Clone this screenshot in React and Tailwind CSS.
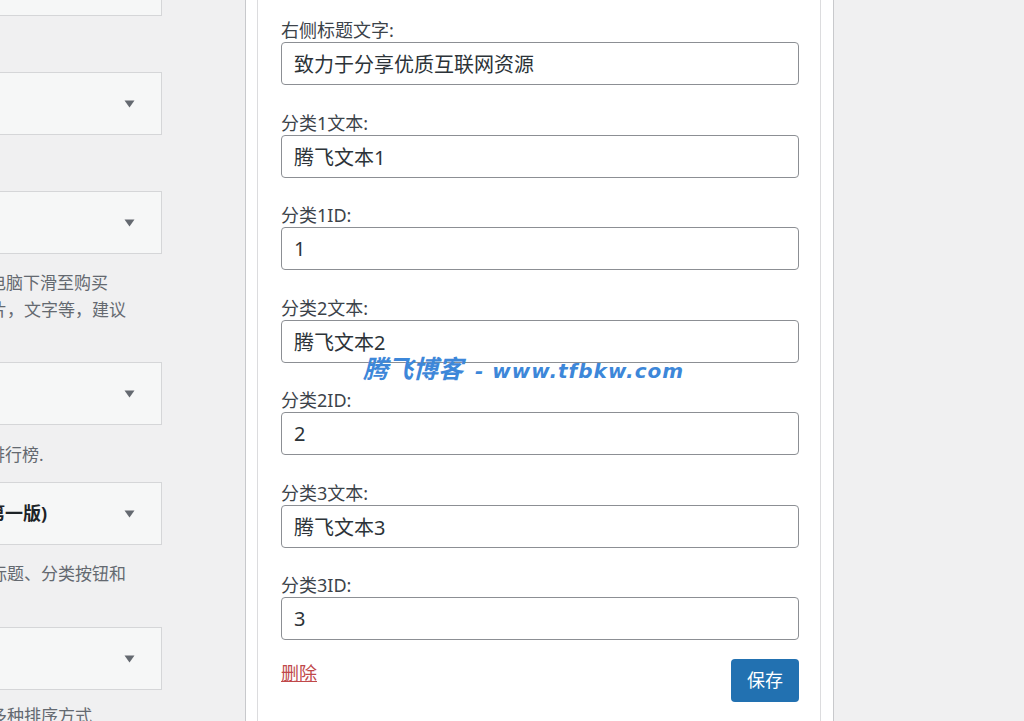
import React from "react";

const fontStack = { fontFamily: '"Noto Sans", "Noto Sans CJK SC", sans-serif' };

const fields = [
  { label: "右侧标题文字:", value: "致力于分享优质互联网资源" },
  { label: "分类1文本:", value: "腾飞文本1" },
  { label: "分类1ID:", value: "1" },
  { label: "分类2文本:", value: "腾飞文本2" },
  { label: "分类2ID:", value: "2" },
  { label: "分类3文本:", value: "腾飞文本3" },
  { label: "分类3ID:", value: "3" },
];

const Arrow = () => (
  <svg width="11" height="8" viewBox="0 0 11 8" className="mr-[26px] shrink-0">
    <path d="M0.5 0.5 L10.5 0.5 L5.5 7.5 Z" fill="#646970" />
  </svg>
);

const SelectBox = ({ className = "", children }) => (
  <div
    className={`shrink-0 w-[162px] h-[63px] bg-[#f6f7f7] border border-l-0 border-[#d5d6d8] flex items-center justify-between ${className}`}
  >
    <div className="overflow-hidden whitespace-nowrap">{children}</div>
    <Arrow />
  </div>
);

const HelpText = ({ children, shift = 12, className = "" }) => (
  <p
    className={`shrink-0 text-[17px] leading-[27px] text-[#646970] whitespace-nowrap ${className}`}
    style={{ marginLeft: -shift }}
  >
    {children}
  </p>
);

const LeftColumn = () => (
  <div className="w-[245px] shrink-0 overflow-hidden flex flex-col">
    {/* select cut off by the top edge */}
    <div className="shrink-0 w-[162px] h-[16px] bg-[#f6f7f7] border-r border-b border-[#d5d6d8]" />
    <SelectBox className="mt-[56px]" />
    <SelectBox className="mt-[56px]" />
    <div className="shrink-0 mt-[15px]">
      <HelpText shift={11}>电脑下滑至购买</HelpText>
      <HelpText shift={10}>片，文字等，建议</HelpText>
    </div>
    <SelectBox className="mt-[39px]" />
    <HelpText shift={12} className="mt-[16px]">排行榜.</HelpText>
    <SelectBox className="mt-[14px]">
      <span className="block text-[18px] font-bold text-[#1d2327] -ml-[13px]">
        第一版)
      </span>
    </SelectBox>
    <HelpText shift={10} className="mt-[15px]">标题、分类按钮和</HelpText>
    <SelectBox className="mt-[40px]" />
    <HelpText shift={10} className="mt-[12px]">多种排序方式</HelpText>
  </div>
);

const Field = ({ label, value }) => (
  <div className="mb-[25.5px]">
    <label className="block text-[18px] leading-[24px] text-[#3c434a]">{label}</label>
    <input
      readOnly
      value={value}
      className="block w-[518px] h-[43px] border border-[#8c8f94] rounded-[4px] px-[12px] text-[20px] text-[#2c3338] bg-white outline-none"
      style={fontStack}
    />
  </div>
);

export default function App() {
  return (
    <div
      className="relative w-[1024px] h-[721px] overflow-hidden bg-[#f0f0f1] flex"
      style={fontStack}
    >
      <LeftColumn />

      {/* widget panel */}
      <div className="w-[589px] shrink-0 bg-white border-x border-[#c8c9cc] pl-[11px] pr-[12px]">
        <div className="w-[564px] h-full border-x border-[#dcdcde] bg-white pt-[18px] pl-[23px]">
          {fields.map((f) => (
            <Field key={f.label} label={f.label} value={f.value} />
          ))}
          <div className="-mt-[6.5px] w-[518px] flex items-start justify-between">
            <a href="#" className="mt-[2px] text-[18px] leading-[24px] text-[#c0484a] underline">
              删除
            </a>
            <button className="w-[68px] h-[43px] rounded-[4px] bg-[#2271b1] text-white text-[18px]">
              保存
            </button>
          </div>
        </div>
      </div>

      <div className="flex-1" />

      {/* watermark */}
      <div className="absolute left-[363px] top-[349px] flex items-baseline italic font-bold text-[#3d87d9] whitespace-nowrap pointer-events-none">
        <span className="text-[25px]" style={{ fontFamily: '"Noto Sans CJK SC", sans-serif' }}>
          腾飞博客
        </span>
        <span
          className="text-[20px] ml-[12px] tracking-[1px]"
          style={{ fontFamily: '"DejaVu Sans", sans-serif' }}
        >
          - www.tfbkw.com
        </span>
      </div>
    </div>
  );
}
